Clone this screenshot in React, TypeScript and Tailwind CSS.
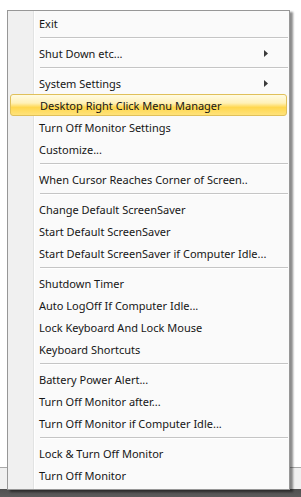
import React from "react";

type Entry = { label?: string; sub?: boolean; active?: boolean; sep?: boolean };

const entries: Entry[] = [
  { label: "Exit" },
  { sep: true },
  { label: "Shut Down etc...", sub: true },
  { sep: true },
  { label: "System Settings", sub: true },
  { label: "Desktop Right Click Menu Manager", active: true },
  { label: "Turn Off Monitor Settings" },
  { label: "Customize..." },
  { sep: true },
  { label: "When Cursor Reaches Corner of Screen.." },
  { sep: true },
  { label: "Change Default ScreenSaver" },
  { label: "Start Default ScreenSaver" },
  { label: "Start Default ScreenSaver if Computer Idle..." },
  { sep: true },
  { label: "Shutdown Timer" },
  { label: "Auto LogOff If Computer Idle..." },
  { label: "Lock Keyboard And Lock Mouse" },
  { label: "Keyboard Shortcuts" },
  { sep: true },
  { label: "Battery Power Alert..." },
  { label: "Turn Off Monitor after..." },
  { label: "Turn Off Monitor if Computer Idle..." },
  { sep: true },
  { label: "Lock & Turn Off Monitor" },
  { label: "Turn Off Monitor" },
];

function Arrow() {
  return (
    <svg width="4" height="7" viewBox="0 0 4 7" className="absolute right-[19px] top-[8px]">
      <path d="M0 0 L4 3.5 L0 7 Z" fill="#3a3a3a" />
    </svg>
  );
}

export default function App() {
  return (
    <div
      className="w-[301px] h-[497px] overflow-hidden pl-[7px] pt-[10px] bg-[linear-gradient(to_bottom,#fff_0,#fff_467px,#a9a9a9_467px,#a9a9a9_468px,#f0f0f0_468px,#f0f0f0_489px,#4f4f4f_489px,#5c5c5c_497px)]"
      style={{ fontFamily: '"Noto Sans", "Open Sans", sans-serif' }}
    >
      <div className="w-[283px] h-[480px] border border-[#979797] pt-[1px] pb-[3px] bg-[linear-gradient(to_right,#f0f0f0_0,#f0f0f0_25px,#e2e3e3_25px,#e2e3e3_26px,#fff_26px,#fff_27px,#fafafa_27px)] shadow-[3px_2px_2px_rgba(0,0,0,0.45)]">
        {entries.map((e, i) =>
          e.sep ? (
            <div key={i} className="h-[8px] flex items-center pl-[32px] pr-[1px]">
              <div className="w-full border-t border-[#c5c5c5] border-b border-b-white" />
            </div>
          ) : (
            <div
              key={i}
              className={
                "relative mx-[2px] h-[22px] flex items-center pt-[2px] pl-[29px] text-[11px] whitespace-nowrap text-[#161616] " +
                (e.active
                  ? "rounded-[3px] border border-[#e0c05a] pl-[28px] bg-[linear-gradient(to_bottom,#fffbe3_0%,#fff1b8_40%,#ffd74e_62%,#ffe27a_100%)]"
                  : "")
              }
            >
              {e.label}
              {e.sub && <Arrow />}
            </div>
          )
        )}
      </div>
    </div>
  );
}
